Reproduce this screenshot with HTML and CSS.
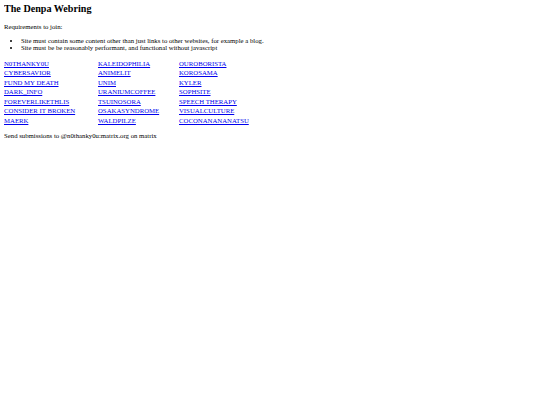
FILE: index.html
```html
<!DOCTYPE html>
<html>
<head>
<meta charset="utf-8">
<title>The Denpa Webring</title>
<link rel="stylesheet" href="styles.css">
</head>
<body>
<h2 class="title">The Denpa Webring</h2>
<p class="intro">Requirements to join:</p>
<ul class="rules">
<li>Site must contain some content other than just links to other websites, for example a blog.</li>
<li>Site must be be reasonably performant, and functional without javascript</li>
</ul>
<div class="ring">
<a href="#">N0THANKY0U</a><a href="#">KALEIDOPHILIA</a><a href="#">OUROBORISTA</a>
<a href="#">CYBERSAVIOR</a><a href="#">ANIMELIT</a><a href="#">KOROSAMA</a>
<a href="#">FUND MY DEATH</a><a href="#">UNIM</a><a href="#">KYLER</a>
<a href="#">DARK_INFO</a><a href="#">URANIUMCOFFEE</a><a href="#">SOPHSITE</a>
<a href="#">FOREVERLIKETHLIS</a><a href="#">TSUINOSORA</a><a href="#">SPEECH THERAPY</a>
<a href="#">CONSIDER IT BROKEN</a><a href="#">OSAKASYNDROME</a><a href="#">VISUALCULTURE</a>
<a href="#">MAERK</a><a href="#">WALDPILZE</a><a href="#">COCONANANANATSU</a>
</div>
<p class="contact">Send submissions to @n0thanky0u:matrix.org on matrix</p>
</body>
</html>
```
FILE: styles.css
```css
html {
  background: #ffffff;
}
body {
  margin: 3px 4px;
  font-family: "Liberation Serif", "Times New Roman", serif;
  font-size: 6.75px;
  color: #000000;
}
.title {
  margin: 0 0 9.4px 0;
  font-size: 10.125px;
  font-weight: bold;
}
.intro {
  margin: 0 0 6.75px 0;
}
.rules {
  margin: 0 0 8.75px 0;
  padding-left: 16.9px;
}
.ring {
  display: grid;
  grid-template-columns: 94px 81px auto;
  justify-content: start;
  row-gap: 2.5px;
}
.ring a {
  color: #0000ee;
  text-decoration: underline;
}
.contact {
  margin: 7.75px 0 0 0;
}
```
